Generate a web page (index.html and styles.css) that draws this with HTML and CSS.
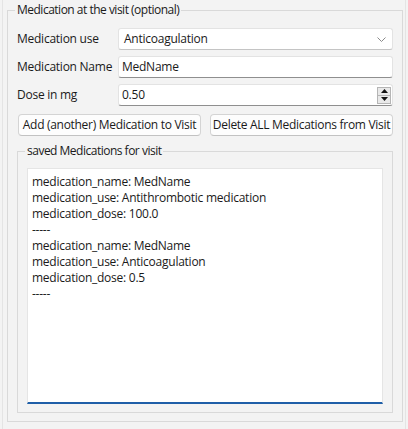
FILE: index.html
```html
<!DOCTYPE html>
<html>
<head>
<meta charset="utf-8">
<link rel="stylesheet" href="styles.css">
</head>
<body>
<div class="page">
  <fieldset class="group outer">
    <legend class="title">Medication at the visit (optional)</legend>
    <div class="form">
      <label class="label">Medication use</label>
      <div class="field combo">
        <span class="value">Anticoagulation</span>
        <svg class="chev" width="9" height="5" viewBox="0 0 9 5"><polyline points="0.5,0.5 4.5,4.5 8.5,0.5" fill="none" stroke="#8a8a8a" stroke-width="1"/></svg>
      </div>
      <label class="label">Medication Name</label>
      <div class="field edit"><span class="value">MedName</span></div>
      <label class="label">Dose in mg</label>
      <div class="field edit spin">
        <span class="value">0.50</span>
        <div class="spinbox">
          <div class="spinbtn"><svg width="7" height="4" viewBox="0 0 7 4"><polygon points="0,4 3.5,0 7,4" fill="#111"/></svg></div>
          <div class="spinbtn"><svg width="7" height="4" viewBox="0 0 7 4"><polygon points="0,0 3.5,4 7,0" fill="#111"/></svg></div>
        </div>
      </div>
    </div>
    <div class="buttons">
      <button class="btn add">Add (another) Medication to Visit</button>
      <button class="btn del">Delete ALL Medications from Visit</button>
    </div>
    <fieldset class="group inner">
      <legend class="title">saved Medications for visit</legend>
      <div class="textedit">
        <div>medication_name: MedName</div>
        <div>medication_use: Antithrombotic medication</div>
        <div>medication_dose: 100.0</div>
        <div>-----</div>
        <div>medication_name: MedName</div>
        <div>medication_use: Anticoagulation</div>
        <div>medication_dose: 0.5</div>
        <div>-----</div>
      </div>
    </fieldset>
  </fieldset>
</div>
</body>
</html>
```
FILE: styles.css
```css
html, body {
  margin: 0;
  padding: 0;
  background: #f3f3f3;
}
body {
  font-family: "Open Sans", "Noto Sans", sans-serif;
  font-size: 12px;
  line-height: 16px;
  color: #1a1a1a;
  width: 408px;
  height: 429px;
  overflow: hidden;
}
.page {
  height: 429px;
  box-sizing: border-box;
  margin: 0 2px;
  border-left: 1px solid #e4e4e4;
  border-right: 1px solid #e4e4e4;
  padding-top: 2px;
}
.group {
  margin: 0;
  border: 1px solid #d9d9d9;
  box-sizing: border-box;
  min-width: 0;
  display: flex;
  flex-direction: column;
}
.outer {
  margin: 0 2px 0 4px;
  height: 420px;
  padding: 10px 9px 8px 9px;
}
.title {
  padding: 0 2px;
  margin-left: -2px;
  font-size: 12px;
  line-height: 16px;
  letter-spacing: -0.5px;
}
.form {
  display: grid;
  grid-template-columns: 101px 1fr;
  row-gap: 6px;
  align-items: center;
}
.label {
  letter-spacing: -0.25px;
  white-space: nowrap;
}
.field {
  height: 22px;
  box-sizing: border-box;
  background: #fff;
  border: 1px solid #e3e3e3;
  border-bottom-color: #8f8f8f;
  border-radius: 3px;
  display: flex;
  align-items: center;
  padding: 0 4px 0 3px;
  letter-spacing: -0.25px;
}
.combo {
  padding-left: 4px;
  justify-content: space-between;
  border-bottom-color: #c4c4c4;
}
.combo .value { padding-left: 1px; }
.chev { margin-right: 2px; }
.spin {
  justify-content: space-between;
  padding-right: 0;
}
.spinbox {
  width: 14px;
  height: 17px;
  box-sizing: border-box;
  border: 1px solid #b5b5b5;
  background: #e9e9e9;
  margin-right: 1px;
  display: flex;
  flex-direction: column;
}
.spinbtn {
  flex: 1;
  display: flex;
  align-items: center;
  justify-content: center;
}
.spinbtn + .spinbtn {
  border-top: 1px solid #b5b5b5;
}
.buttons {
  display: flex;
  gap: 9px;
  margin-top: 8px;
  padding-left: 1px;
}
.btn {
  flex: 1;
  height: 22px;
  margin: 0;
  padding: 0;
  font-family: inherit;
  font-size: 12px;
  line-height: 16px;
  letter-spacing: -0.3px;
  color: #1a1a1a;
  background: #fdfdfd;
  border: 1px solid #d4d4d4;
  border-bottom-color: #c2c2c2;
  border-radius: 4px;
  white-space: nowrap;
}
.inner {
  flex: 1;
  margin-top: 7px;
  padding: 9px 9px 8px 9px;
}
.textedit {
  flex: 1;
  background: #fff;
  border: 1px solid #e5e5e5;
  border-bottom: 2px solid #1f5fa8;
  padding: 5px 4px;
  letter-spacing: -0.25px;
}
```
